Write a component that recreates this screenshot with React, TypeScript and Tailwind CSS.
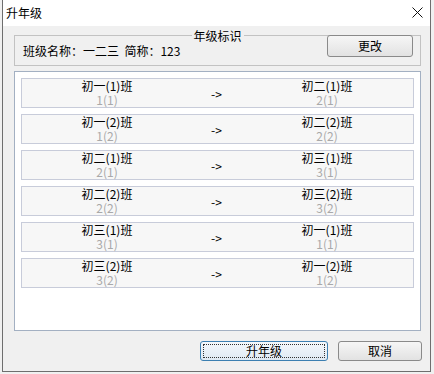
const rows = [
  { from: "初一(1)班", fromCode: "1(1)", to: "初二(1)班", toCode: "2(1)" },
  { from: "初一(2)班", fromCode: "1(2)", to: "初二(2)班", toCode: "2(2)" },
  { from: "初二(1)班", fromCode: "2(1)", to: "初三(1)班", toCode: "3(1)" },
  { from: "初二(2)班", fromCode: "2(2)", to: "初三(2)班", toCode: "3(2)" },
  { from: "初三(1)班", fromCode: "3(1)", to: "初一(1)班", toCode: "1(1)" },
  { from: "初三(2)班", fromCode: "3(2)", to: "初一(2)班", toCode: "1(2)" },
];

const font = { fontFamily: '"Noto Sans CJK SC", "Noto Sans", sans-serif' };

const App = () => {
  return (
    <div className="h-[374px] w-[434px] bg-[#f0f0f0] pl-[2px] text-[12px] text-black" style={font}>
      <div className="flex h-[372px] w-[429px] flex-col border-x border-b border-[#6e6e6e]">
        <div className="flex h-[26px] items-center justify-between bg-white pl-[3px] pr-[7px]">
          <span className="text-[12px] leading-none">升年级</span>
          <svg width="11" height="11" viewBox="0 0 11 11" className="mb-[1px]">
            <path d="M0.5 0.5 L10.5 10.5 M10.5 0.5 L0.5 10.5" stroke="#111" strokeWidth="1" />
          </svg>
        </div>

        <div className="flex flex-1 flex-col pl-[11px] pr-[9px] pt-[9px]">
          <div className="relative flex h-[31px] items-center justify-between border border-[#c2c2c2] pl-[8px] pr-[7px]">
            <span className="absolute left-1/2 top-[-7px] -translate-x-1/2 bg-[#f0f0f0] px-[2px] leading-[13px]">
              年级标识
            </span>
            <span className="pt-[1px] leading-none">
              班级名称：一二三&nbsp;&nbsp;简称：123
            </span>
            <button className="mt-[-9px] flex h-[22px] w-[86px] items-center justify-center rounded-[3px] border border-[#8a8a8a] bg-gradient-to-b from-[#f6f6f6] to-[#e2e2e2] leading-none">
              更改
            </button>
          </div>

          <div className="mt-[5px] flex h-[260px] flex-col gap-[6px] border border-[#a3b0c2] bg-white p-[6px]">
            {rows.map((r) => (
              <div
                key={r.from}
                className="grid h-[30px] grid-cols-[170px_49px_1fr] border border-[#c8ccda] bg-[#f7f7f7] text-center"
              >
                <div className="flex flex-col gap-[2px] pt-[1px]">
                  <span className="leading-[12px]">{r.from}</span>
                  <span className="leading-[12px] text-[#a9a9a9]">{r.fromCode}</span>
                </div>
                <div className="flex items-center justify-center pt-[2px] leading-none">-&gt;</div>
                <div className="flex flex-col gap-[2px] pt-[1px]">
                  <span className="leading-[12px]">{r.to}</span>
                  <span className="leading-[12px] text-[#a9a9a9]">{r.toCode}</span>
                </div>
              </div>
            ))}
          </div>

          <div className="mt-[10px] flex justify-end gap-[10px]">
            <button className="flex h-[20px] w-[128px] items-center justify-center rounded-[3px] border border-[#3c7fb1] bg-gradient-to-b from-[#f4f8fc] to-[#dfe9f3] p-[2px]">
              <span className="flex h-full w-full items-center justify-center border border-dotted border-[#333] leading-none">
                升年级
              </span>
            </button>
            <button className="mr-[-1px] flex h-[20px] w-[84px] items-center justify-center rounded-[3px] border border-[#8a8a8a] bg-gradient-to-b from-[#f6f6f6] to-[#e2e2e2] leading-none">
              取消
            </button>
          </div>
        </div>
      </div>
    </div>
  );
};

export default App;
